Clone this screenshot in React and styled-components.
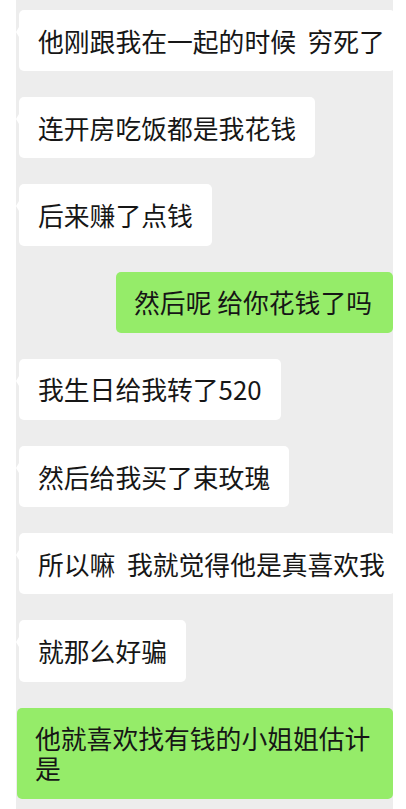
import React from 'react'
import styled, { createGlobalStyle } from 'styled-components'

const messages = [
  { id: 1, side: 'left', text: '他刚跟我在一起的时候  穷死了', nowrap: true },
  { id: 2, side: 'left', text: '连开房吃饭都是我花钱' },
  { id: 3, side: 'left', text: '后来赚了点钱' },
  { id: 4, side: 'right', text: '然后呢 给你花钱了吗' },
  { id: 5, side: 'left', text: '我生日给我转了520' },
  { id: 6, side: 'left', text: '然后给我买了束玫瑰' },
  { id: 7, side: 'left', text: '所以嘛  我就觉得他是真喜欢我', nowrap: true },
  { id: 8, side: 'left', text: '就那么好骗' },
  { id: 9, side: 'right', text: '他就喜欢找有钱的小姐姐估计是' }
]

const App = () => (
  <Root>
    <GlobalStyle />
    <Chat>
      {messages.map(msg => (
        <Bubble key={msg.id} side={msg.side} $nowrap={msg.nowrap}>
          {msg.text}
        </Bubble>
      ))}
    </Chat>
  </Root>
)

export default App

const GlobalStyle = createGlobalStyle`
  html, body {
    margin: 0;
    padding: 0;
    background: #ffffff;
  }
`

const Root = styled.div`
  width: 406px;
  height: 809px;
  background: #ffffff;
  overflow: hidden;
`

const Chat = styled.div`
  margin-left: 16px;
  width: 377px;
  height: 809px;
  box-sizing: border-box;
  padding-top: 10px;
  background: #ededed;
  display: flex;
  flex-direction: column;
  align-items: flex-start;
  gap: 26px;
  overflow: hidden;
`

const Bubble = styled.div`
  position: relative;
  box-sizing: border-box;
  max-width: 376px;
  padding: ${({ side }) => (side === 'right' ? '15.6px 21px 15.6px 18px' : '15.6px 19px')};
  margin-left: ${({ side }) => (side === 'right' ? '0' : '3px')};
  align-self: ${({ side }) => (side === 'right' ? 'flex-end' : 'flex-start')};
  background: ${({ side }) => (side === 'right' ? '#95ec69' : '#ffffff')};
  color: #161616;
  border-radius: 5px;
  font-family: "Noto Sans CJK SC", "Noto Sans", sans-serif;
  font-size: 25.8px;
  line-height: 30px;
  white-space: ${({ $nowrap }) => ($nowrap ? 'pre' : 'pre-wrap')};

  &::before {
    content: '';
    position: absolute;
    top: 17px;
    ${({ side }) => (side === 'right' ? 'right: -3px;' : 'left: -3px;')}
    width: 0;
    height: 0;
    border-top: 5px solid transparent;
    border-bottom: 5px solid transparent;
    ${({ side }) => (side === 'right'
      ? 'border-left: 3px solid #95ec69;'
      : 'border-right: 3px solid #ffffff;')}
  }
`
